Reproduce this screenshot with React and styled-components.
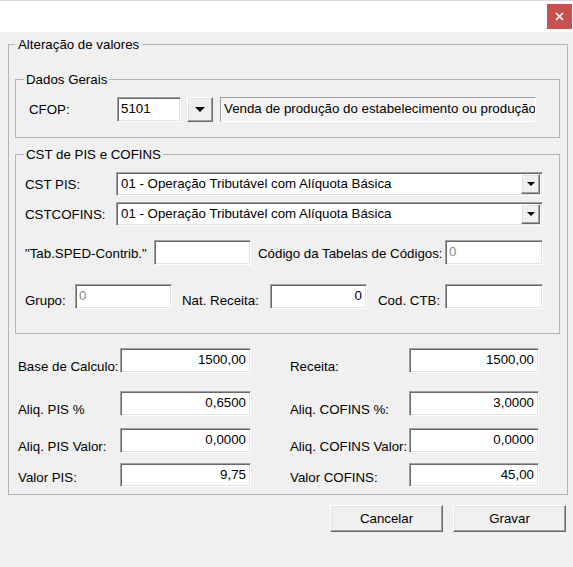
import React from 'react';
import styled, { createGlobalStyle } from 'styled-components';

const GlobalStyle = createGlobalStyle`
  html, body {
    margin: 0;
    padding: 0;
    background: #f0f0f0;
  }
  body {
    font-family: "Liberation Sans", Arial, sans-serif;
    font-size: 13.3px;
    color: #000;
  }
`;

const Window = styled.div`
  width: 573px;
  height: 567px;
  background: #f0f0f0;
  overflow: hidden;
`;

const TitleBar = styled.div`
  height: 32px;
  border-top: 1px solid #dadada;
  background: #ffffff;
  display: flex;
  justify-content: flex-end;
  align-items: flex-start;
  padding-top: 3px;
  box-sizing: border-box;
`;

const CloseButton = styled.div`
  width: 25px;
  height: 25px;
  margin-right: 1px;
  background: #c75050;
  display: flex;
  align-items: center;
  justify-content: center;
`;

const Body = styled.div`
  padding: 5px 0 0 8px;
`;

const GroupBox = styled.fieldset`
  margin: ${p => p.$mt || 0}px 0 0 0;
  padding: ${p => p.$pad};
  border: 1px solid #b4b4b4;
  box-sizing: border-box;
  width: ${p => (p.$w ? `${p.$w}px` : 'auto')};
  min-width: 0;
`;

const Legend = styled.legend`
  padding: 0 ${p => p.$px || 2}px;
  line-height: 15px;
  font-size: 13.3px;
`;

const Row = styled.div`
  display: flex;
  align-items: ${p => p.$align || 'center'};
  margin-top: ${p => p.$mt || 0}px;
  padding-left: ${p => p.$pl || 0}px;
`;

const Label = styled.span`
  flex: none;
  width: ${p => p.$w}px;
  margin-left: ${p => p.$ml || 0}px;
  padding-top: ${p => p.$pt || 0}px;
  margin-bottom: ${p => p.$mb || 0}px;
  line-height: 15px;
  white-space: nowrap;
`;

const sunken = `
  border: 1px solid;
  border-color: #a0a0a0 #ffffff #ffffff #a0a0a0;
  box-shadow: inset 1px 1px 0 #696969, inset -1px -1px 0 #e3e3e3;
  box-sizing: border-box;
`;

const raised = `
  border: 1px solid;
  border-color: #ffffff #696969 #696969 #ffffff;
  box-shadow: inset -1px -1px 0 #a0a0a0, inset 1px 1px 0 #e3e3e3;
  box-sizing: border-box;
  background: #f0f0f0;
`;

const TextBox = styled.div`
  ${sunken}
  flex: none;
  width: ${p => p.$w}px;
  height: ${p => p.$h || 25}px;
  background: #ffffff;
  display: flex;
  align-items: center;
  justify-content: ${p => (p.$right ? 'flex-end' : 'flex-start')};
  padding: 0 4px 2px 3px;
  color: ${p => (p.$muted ? '#8a8a8a' : '#000')};
  white-space: nowrap;
  overflow: hidden;
`;

const Description = styled.div`
  flex: none;
  width: ${p => p.$w}px;
  height: 25px;
  margin-left: 7px;
  box-sizing: border-box;
  border: 1px solid;
  border-color: #a0a0a0 #ffffff #ffffff #a0a0a0;
  background: #f4f4f4;
  display: flex;
  align-items: center;
  padding: 0 0 2px 3px;
  white-space: nowrap;
  overflow: hidden;
`;

const DropButton = styled.div`
  ${raised}
  flex: none;
  width: ${p => p.$w}px;
  height: ${p => p.$h}px;
  margin-left: ${p => p.$ml || 0}px;
  display: flex;
  align-items: center;
  justify-content: center;
`;

const Arrow = styled.span`
  width: 0;
  height: 0;
  border-left: ${p => p.$s}px solid transparent;
  border-right: ${p => p.$s}px solid transparent;
  border-top: ${p => p.$h}px solid #000;
`;

const Combo = styled.div`
  ${sunken}
  flex: none;
  width: ${p => p.$w}px;
  height: 24px;
  background: #ffffff;
  display: flex;
  align-items: center;
  padding: 2px 2px 2px 2px;
`;

const ComboText = styled.span`
  flex: 1;
  padding: 0 0 1px 2px;
  white-space: nowrap;
`;

const Values = styled.div`
  padding-left: 3px;
`;

const Field = styled.div`
  display: flex;
  align-items: flex-end;
  margin-left: ${p => p.$ml || 0}px;
`;

const Actions = styled.div`
  display: flex;
  justify-content: flex-end;
  gap: 10px;
  margin-top: 10px;
  padding-right: 7px;
`;

const Button = styled.div`
  ${raised}
  width: 113px;
  height: 27px;
  display: flex;
  align-items: center;
  justify-content: center;
  padding-bottom: 1px;
`;

const valueRows = [
  { mt: 14, h: 25, mb: -1, left: ['Base de Calculo:', '1500,00'], right: ['Receita:', '1500,00'] },
  { mt: 18, h: 25, mb: -1, left: ['Aliq. PIS %', '0,6500'], right: ['Aliq. COFINS %:', '3,0000'] },
  { mt: 12, h: 25, mb: -1, left: ['Aliq. PIS Valor:', '0,0000'], right: ['Aliq. COFINS Valor:', '0,0000'] },
  { mt: 10, h: 24, mb: 2, left: ['Valor PIS:', '9,75'], right: ['Valor COFINS:', '45,00'] },
];

const CstCombo = ({ label, value, mt }) => (
  <Row $pl={1} $mt={mt}>
    <Label $w={91}>{label}</Label>
    <Combo $w={427}>
      <ComboText>{value}</ComboText>
      <DropButton $w={19} $h={20}>
        <Arrow $s={4} $h={4} />
      </DropButton>
    </Combo>
  </Row>
);

export default function App() {
  return (
    <Window>
      <GlobalStyle />
      <TitleBar>
        <CloseButton>
          <svg width="9" height="9" viewBox="0 0 9 9">
            <path d="M1 1 L8 8 M8 1 L1 8" stroke="#fff" strokeWidth="1.7" />
          </svg>
        </CloseButton>
      </TitleBar>
      <Body>
        <GroupBox $w={560} $pad="20px 7px 7px 6px">
          <Legend $px={3}>Alteração de valores</Legend>

          <GroupBox $pad="10px 8px 15px 8px">
            <Legend>Dados Gerais</Legend>
            <Row $pl={5}>
              <Label $w={88}>CFOP:</Label>
              <TextBox $w={64}>5101</TextBox>
              <DropButton $w={26} $h={25} $ml={6}>
                <Arrow $s={5} $h={5} />
              </DropButton>
              <Description $w={316}>Venda de produção do estabelecimento ou produção</Description>
            </Row>
          </GroupBox>

          <GroupBox $mt={9} $pad="10px 8px 24px 8px">
            <Legend>CST de PIS e COFINS</Legend>
            <CstCombo label="CST PIS:" value="01 - Operação Tributável com Alíquota Básica" />
            <CstCombo mt={6} label="CSTCOFINS:" value="01 - Operação Tributável com Alíquota Básica" />
            <Row $pl={1} $mt={14}>
              <Label $w={129} $pt={2}>"Tab.SPED-Contrib."</Label>
              <TextBox $w={97} />
              <Label $w={187} $ml={7} $pt={2}>Código da Tabelas de Códigos:</Label>
              <TextBox $w={98} $muted>0</TextBox>
            </Row>
            <Row $pl={1} $mt={19}>
              <Label $w={50} $pt={7}>Grupo:</Label>
              <TextBox $w={97} $muted>0</TextBox>
              <Label $w={88} $ml={10} $pt={7}>Nat. Receita:</Label>
              <TextBox $w={97} $right>0</TextBox>
              <Label $w={67} $ml={11} $pt={7}>Cod. CTB:</Label>
              <TextBox $w={98} />
            </Row>
          </GroupBox>

          <Values>
            {valueRows.map((r, i) => (
              <Row key={i} $mt={r.mt} $align="flex-end">
                <Field>
                  <Label $w={102} $mb={r.mb}>{r.left[0]}</Label>
                  <TextBox $w={131} $h={r.h} $right>{r.left[1]}</TextBox>
                </Field>
                <Field $ml={39}>
                  <Label $w={119} $mb={r.mb}>{r.right[0]}</Label>
                  <TextBox $w={130} $h={r.h} $right>{r.right[1]}</TextBox>
                </Field>
              </Row>
            ))}
          </Values>
        </GroupBox>

        <Actions>
          <Button>Cancelar</Button>
          <Button>Gravar</Button>
        </Actions>
      </Body>
    </Window>
  );
}
